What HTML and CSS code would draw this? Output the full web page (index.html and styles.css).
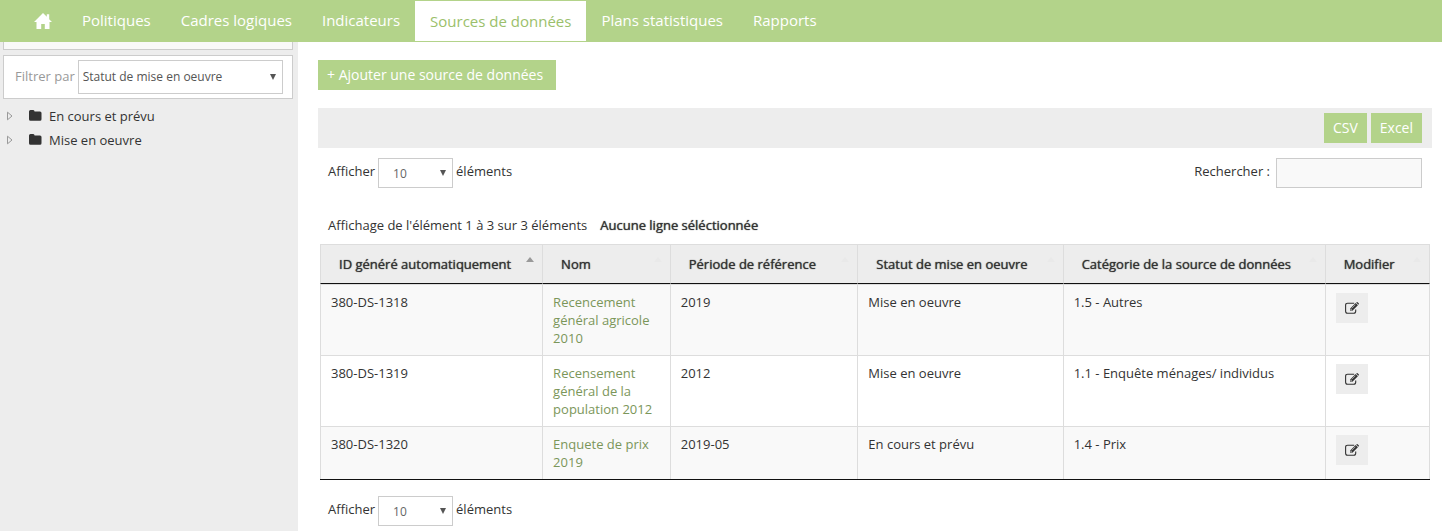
FILE: index.html
```html
<!DOCTYPE html>
<html lang="fr">
<head>
<meta charset="utf-8">
<title>Sources de données</title>
<link rel="stylesheet" href="styles.css">
</head>
<body>
<svg class="defs" aria-hidden="true">
  <symbol id="folder" viewBox="0 0 13 11"><path d="M0 1.500Q0 0 1.500 0h2.300Q5.400 0 5.600 1.400H11q1.500 0 1.500 1.600v6.200q0 1.600-1.500 1.600H1.500Q0 10.800 0 9.200z"/></symbol>
  <symbol id="caret" viewBox="0 0 6 10"><path d="M.5 1.2 5 5 .5 8.800z" fill="none" stroke="currentColor"/></symbol>
  <symbol id="edit" viewBox="0 0 14 12"><path d="M9.200 1.200H2.600Q.6 1.200.6 3.200v6.100q0 2 2 2h6.100q2 0 2-2V7.600" fill="none" stroke="currentColor" stroke-width="1.100"/><path d="M5.200 6.500 10.700 1l2.200 2.200-5.500 5.500H5.200zM11.200.5l.4-.3q.5-.4 1 0l1.100 1.100q.5.500 0 1l-.4.400z"/><path d="m6.700 6.400 3.700-3.700M6 7v1h1" fill="none" stroke="#ededed" stroke-width=".6"/></symbol>
</svg>
<nav class="nav">
  <a class="nav-item nav-home" href="#" aria-label="Accueil"><svg width="18" height="16" viewBox="0 0 18 16"><path d="M9 0 0 9h2.500v7h4.700v-5h3.600v5h4.700V9H18l-2.800-2.800V1.200h-2.400v2.600z"/></svg></a>
  <a class="nav-item" href="#">Politiques</a>
  <a class="nav-item" href="#">Cadres logiques</a>
  <a class="nav-item" href="#">Indicateurs</a>
  <a class="nav-item active" href="#" aria-current="page">Sources de données</a>
  <a class="nav-item" href="#">Plans statistiques</a>
  <a class="nav-item" href="#">Rapports</a>
</nav>
<div class="layout">
  <aside class="sidebar">
    <div class="panel-end"></div>
    <div class="filter">
      <label for="filter">Filtrer par</label>
      <span class="select select-filter"><select id="filter"><option>Statut de mise en oeuvre</option></select></span>
    </div>
    <ul class="tree">
      <li><svg class="caret" width="6" height="10"><use href="#caret"/></svg><svg class="folder" width="13" height="11"><use href="#folder"/></svg>En cours et prévu</li>
      <li><svg class="caret" width="6" height="10"><use href="#caret"/></svg><svg class="folder" width="13" height="11"><use href="#folder"/></svg>Mise en oeuvre</li>
    </ul>
  </aside>
  <main class="main">
    <button class="btn btn-add" type="button">+ Ajouter une source de données</button>
    <div class="toolbar">
      <button class="btn" type="button">CSV</button>
      <button class="btn" type="button">Excel</button>
    </div>
    <div class="controls">
      <div class="length">
        <label for="len-top">Afficher</label>
        <span class="select"><select id="len-top"><option>10</option></select></span>
        <span>éléments</span>
      </div>
      <div class="search">
        <label for="search">Rechercher :</label>
        <input id="search" type="search">
      </div>
    </div>
    <p class="info"><span>Affichage de l'élément 1 à 3 sur 3 éléments</span><strong>Aucune ligne séléctionnée</strong></p>
    <table class="grid">
      <colgroup><col class="c-id"><col class="c-name"><col class="c-period"><col class="c-status"><col class="c-cat"><col class="c-edit"></colgroup>
      <thead>
        <tr><th class="asc" aria-sort="ascending">ID généré automatiquement</th><th>Nom</th><th>Période de référence</th><th>Statut de mise en oeuvre</th><th>Catégorie de la source de données</th><th>Modifier</th></tr>
      </thead>
      <tbody>
        <tr><td>380-DS-1318</td><td><a href="#">Recencement général agricole 2010</a></td><td>2019</td><td>Mise en oeuvre</td><td>1.5 - Autres</td><td><button class="edit" type="button" aria-label="Modifier 380-DS-1318"><svg width="14" height="12"><use href="#edit"/></svg></button></td></tr>
        <tr><td>380-DS-1319</td><td><a href="#">Recensement général de la population 2012</a></td><td>2012</td><td>Mise en oeuvre</td><td>1.1 - Enquête ménages/ individus</td><td><button class="edit" type="button" aria-label="Modifier 380-DS-1319"><svg width="14" height="12"><use href="#edit"/></svg></button></td></tr>
        <tr><td>380-DS-1320</td><td><a href="#">Enquete de prix 2019</a></td><td>2019-05</td><td>En cours et prévu</td><td>1.4 - Prix</td><td><button class="edit" type="button" aria-label="Modifier 380-DS-1320"><svg width="14" height="12"><use href="#edit"/></svg></button></td></tr>
      </tbody>
    </table>
    <div class="controls controls-bottom">
      <div class="length">
        <label for="len-bottom">Afficher</label>
        <span class="select"><select id="len-bottom"><option>10</option></select></span>
        <span>éléments</span>
      </div>
    </div>
  </main>
</div>
</body>
</html>
```

FILE: styles.css
```css
* { box-sizing: border-box; }
body {
  margin: 0;
  min-height: 100vh;
  display: flex;
  flex-direction: column;
  background: #fff;
  color: #333;
  font: 13px/18px "Open Sans", "Noto Sans", sans-serif;
}
button, input, select { font: inherit; border-radius: 0; margin: 0; }
svg { display: block; fill: currentColor; }
.defs { display: none; }

.nav {
  display: flex;
  height: 42px;
  padding: 1px 19px;
  background: #b3d38a;
}
.nav-item {
  display: flex;
  align-items: center;
  padding: 0 15px 2px;
  color: #fff;
  font-size: 15px;
  text-decoration: none;
}
.nav-home { padding-bottom: 0; }
.nav-item.active { padding-bottom: 0; background: #fff; color: #9bbf6b; }

.layout { display: flex; flex: 1; }
.sidebar {
  flex: 0 0 298px;
  padding: 0 5px 0 3px;
  background: #ededed;
}
.panel-end {
  height: 8px;
  border: 1px solid #ccc;
  border-top: 0;
  background: #f9f9f9;
}
.filter {
  display: flex;
  gap: 3px;
  height: 44px;
  margin-top: 5px;
  padding: 4px 9px 0 11px;
  border: 1px solid #ccc;
  background: #fff;
  color: #999;
  line-height: 32px;
}
.tree { list-style: none; margin: 5px 0 0; padding: 0 0 0 4px; }
.tree li { display: flex; align-items: center; height: 24px; }
.caret { color: #999; margin-right: 16px; }
.folder { margin: 0 7px 2px 0; }

.select { position: relative; display: flex; width: 75px; height: 30px; }
.select select {
  appearance: none;
  width: 100%;
  padding: 0 14px;
  border: 1px solid #ccc;
  background: #fff;
  color: #666;
  font-size: 12px;
}
.select::after {
  content: "";
  position: absolute;
  right: 7px;
  top: 12px;
  border: 3px solid transparent;
  border-top: 6px solid #555;
  border-bottom: 0;
  pointer-events: none;
}
.select-filter { flex: 1; height: 34px; }
.select-filter select { padding: 0 4px; color: #555; }
.select-filter::after { top: 14px; right: 7px; }

.main { flex: 1; min-width: 0; padding: 18px 10px 5px 20px; }
.btn {
  height: 30px;
  padding: 0 9px;
  border: 0;
  background: #b3d38a;
  color: #fff;
  font-size: 14px;
}
.btn-add { display: block; padding: 0 13px 0 9px; }
.toolbar {
  display: flex;
  justify-content: flex-end;
  gap: 4px;
  margin-top: 18px;
  padding: 5px 10px;
  background: #ededed;
}
.controls {
  display: flex;
  justify-content: space-between;
  padding: 10px 10px 0;
}
.controls-bottom { padding-top: 16px; }
.length { display: flex; gap: 3px; line-height: 27px; }
.search { display: flex; gap: 6px; line-height: 27px; }
.search input {
  width: 146px;
  height: 30px;
  border: 1px solid #ccc;
  background: #f9f9f9;
}
.info { display: flex; gap: 13px; margin: 28px 0 0; padding: 0 10px 10px; }
.info strong, .grid th { font-weight: 500; text-shadow: 0 0 1px #333; }

.grid {
  width: calc(100% - 4px);
  margin-left: 2px;
  table-layout: fixed;
  border-collapse: separate;
  border-spacing: 0;
  border-bottom: 1px solid #111;
}
.c-id { width: 20.1%; }
.c-name { width: 11.5%; }
.c-period { width: 16.9%; }
.c-status { width: 18.5%; }
.c-cat { width: 23.6%; }
.c-edit { width: 9.4%; }
.grid th, .grid td { border-right: 1px solid #ddd; text-align: left; vertical-align: top; }
.grid th:first-child, .grid td:first-child { border-left: 1px solid #ddd; }
.grid th {
  position: relative;
  padding: 10px 18px;
  border-top: 1px solid #ddd;
  border-bottom: 1px solid #111;
  background: #ededed;
  white-space: nowrap;
}
.grid th::after {
  content: "";
  position: absolute;
  right: 8px;
  top: 12px;
  border: 4px solid transparent;
  border-top: 0;
  border-bottom: 5px solid #e9e9e9;
}
.grid th.asc::after { border-bottom-color: #999; }
.grid td { padding: 8px 10px; border-top: 1px solid #ddd; }
.grid tbody tr:nth-child(odd) { background: #f9f9f9; }
.grid a { color: #7b965a; text-decoration: none; }
.edit {
  display: flex;
  align-items: center;
  justify-content: center;
  width: 32px;
  height: 30px;
  padding: 0;
  border: 0;
  background: #ededed;
  color: #333;
}
```
